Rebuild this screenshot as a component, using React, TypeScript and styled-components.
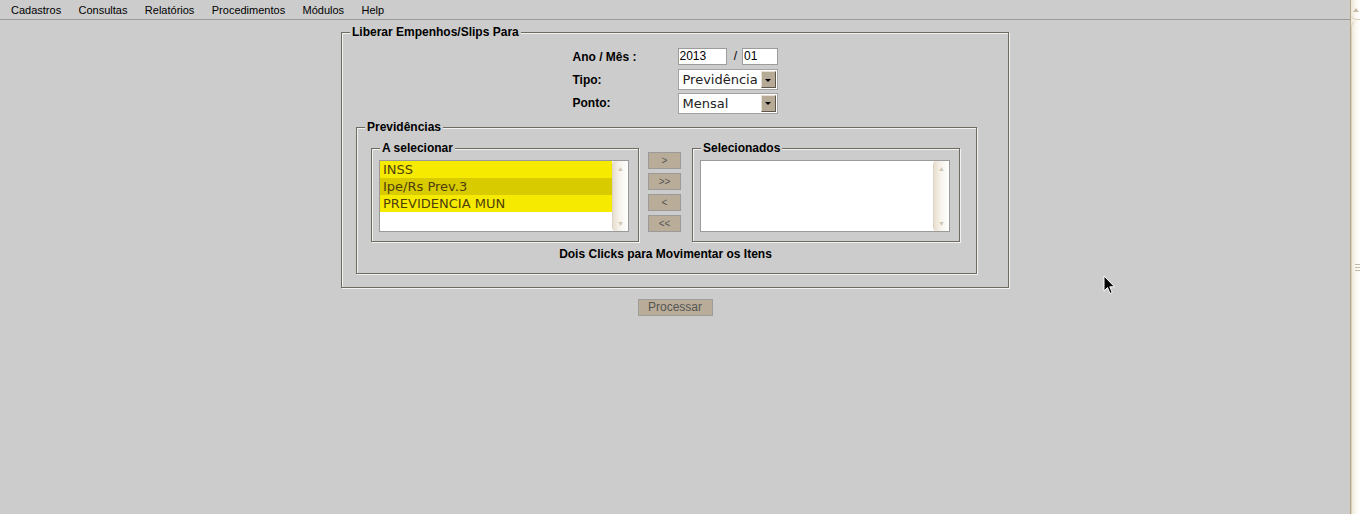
import React from "react";
import styled, { createGlobalStyle } from "styled-components";

const GlobalStyle = createGlobalStyle`
  html, body { margin: 0; padding: 0; background: #cccccc; overflow: hidden; }
  #root { width: 1360px; height: 514px; }
`;

const Page = styled.div`
  position: relative;
  display: flex;
  width: 1360px;
  height: 514px;
  background: #cccccc;
  font-family: "Liberation Sans", Arial, sans-serif;
`;

const Main = styled.div`
  flex: 1;
  min-width: 0;
  display: flex;
  flex-direction: column;
`;

const MenuBar = styled.nav`
  display: flex;
  align-items: center;
  gap: 17.4px;
  height: 19px;
  padding-left: 11px;
  border-bottom: 1px solid #9a9a9a;
  font-size: 11px;
  color: #000;
`;

const MenuItem = styled.span`
  white-space: nowrap;
  line-height: 20px;
`;

const Content = styled.div`
  display: flex;
  flex-direction: column;
  align-items: center;
  padding-top: 6px;
`;

const Group = styled.fieldset<{ $w: number; $pl: number; $pr: number; $pb: number; $mt?: number }>`
  box-sizing: border-box;
  width: ${(p) => p.$w}px;
  margin: ${(p) => p.$mt ?? 0}px 0 0;
  min-width: 0;
  min-inline-size: 0;
  padding: 0 ${(p) => p.$pr}px ${(p) => p.$pb}px ${(p) => p.$pl}px;
  border: 1px solid #6f6a60;
  box-shadow: inset 1px 1px 0 #f2f2f2, 1px 1px 0 #f2f2f2;
`;

const Legend = styled.legend<{ $shift: number }>`
  margin-left: ${(p) => p.$shift}px;
  padding: 0 2px;
  font: bold 12px/13px "Liberation Sans", Arial, sans-serif;
  color: #000;
  background: #cccccc;
`;

const FormGrid = styled.div`
  display: grid;
  grid-template-columns: 105px 100px;
  grid-template-rows: 23px 23px 24px;
  justify-content: center;
  align-items: center;
  margin-top: 6px;
`;

const Label = styled.span`
  font: bold 12px/14px "Liberation Sans", Arial, sans-serif;
  color: #000;
  white-space: nowrap;
`;

const DateRow = styled.div`
  display: flex;
  align-items: center;
`;

const TextBox = styled.div<{ $w: number }>`
  box-sizing: border-box;
  width: ${(p) => p.$w}px;
  height: 17px;
  padding-left: 1px;
  background: #fff;
  border: 1px solid #9c9c9c;
  font: 12px/15px "Liberation Sans", Arial, sans-serif;
  color: #000;
`;

const Slash = styled.span`
  margin: 0 5px 0 7px;
  font: 12px/15px "Liberation Sans", Arial, sans-serif;
  color: #000;
`;

const Select = styled.div`
  box-sizing: border-box;
  display: flex;
  width: 100px;
  height: 21px;
  padding: 1px;
  background: #fff;
  border: 1px solid #a3a3a3;
`;

const SelectText = styled.span`
  flex: 1;
  min-width: 0;
  padding-left: 3px;
  overflow: hidden;
  white-space: nowrap;
  font: 13px/17px "DejaVu Sans", sans-serif;
  color: #222;
`;

const SelectArrow = styled.span`
  box-sizing: border-box;
  display: flex;
  align-items: center;
  justify-content: center;
  width: 15px;
  background: #b7aa96;
  border: 1px solid;
  border-color: #e6dfd2 #5c554a #5c554a #e6dfd2;

  &::after {
    content: "";
    width: 0;
    height: 0;
    border-left: 3px solid transparent;
    border-right: 3px solid transparent;
    border-top: 3px solid #000;
    margin-top: 1px;
  }
`;

const Transfer = styled.div`
  display: flex;
  align-items: flex-start;
  margin-top: 8px;
`;

const ButtonCol = styled.div`
  display: flex;
  flex-direction: column;
  gap: 4px;
  margin: 10px 11px 0 9px;
`;

const MoveButton = styled.button`
  box-sizing: border-box;
  width: 33px;
  height: 17px;
  padding: 0;
  background: #b9ac98;
  border: 1px solid #9a9a9a;
  font: 10px/15px "Liberation Sans", Arial, sans-serif;
  color: #555;
`;

const ListBox = styled.div`
  box-sizing: border-box;
  display: flex;
  width: 250px;
  height: 72px;
  margin-top: 5px;
  background: #fff;
  border: 1px solid #9a9a9a;
`;

const Rows = styled.div`
  flex: 1;
  min-width: 0;
`;

const Row = styled.div<{ $dark?: boolean }>`
  height: 17px;
  padding-left: 3px;
  font: 13px/17px "DejaVu Sans", sans-serif;
  color: #4e3e0a;
  white-space: nowrap;
  background: ${(p) => (p.$dark ? "#d8cb00" : "#f6ea00")};
`;

const ListScroll = styled.div`
  box-sizing: border-box;
  display: flex;
  flex-direction: column;
  justify-content: space-between;
  align-items: center;
  width: 16px;
  padding: 4px 0 3px;
  border-left: 1px solid #ddd4c3;
  border-radius: 4px;
  background: linear-gradient(to right, #e7dfcf, #f7f3ec 45%, #ffffff);
  font-size: 7px;
  line-height: 8px;
  color: #cfc5b3;
`;

const Hint = styled.div`
  width: 589px;
  margin-top: 6px;
  text-align: center;
  font: bold 12px/13px "Liberation Sans", Arial, sans-serif;
  color: #000;
`;

const ProcessButton = styled.button`
  box-sizing: border-box;
  width: 75px;
  height: 17px;
  margin-top: 11px;
  padding: 0;
  background: #b9ac98;
  border: 1px solid #9d9d9d;
  font: 12px/15px "Liberation Sans", Arial, sans-serif;
  color: #555;
`;

const PageScroll = styled.div`
  box-sizing: border-box;
  display: flex;
  flex-direction: column;
  width: 10px;
  height: 514px;
  border-left: 1px solid #b8a886;
  background: linear-gradient(to right, #ece5d7, #faf7f1 50%, #ffffff);
`;

const ScrollArrow = styled.div`
  display: flex;
  justify-content: center;
  height: 20px;
  padding-top: 8px;
  box-sizing: border-box;
  border-bottom: 1px solid #d6ccb8;
  border-bottom-left-radius: 6px;

  &::after {
    content: "";
    width: 0;
    height: 0;
    border-left: 3px solid transparent;
    border-right: 3px solid transparent;
    border-bottom: 4px solid #c9bea9;
  }
`;

const Thumb = styled.div`
  flex: 1;
  display: flex;
  flex-direction: column;
  justify-content: center;
  align-items: flex-end;
  gap: 2px;
  margin-top: 1px;
  border-top-left-radius: 6px;
  border-left: 1px solid #d9cfbc;
`;

const Grip = styled.span`
  display: block;
  width: 5px;
  height: 1px;
  background: #c3b8a2;
`;

const Cursor = styled.svg`
  position: absolute;
  left: 1103px;
  top: 275px;
`;

export default function App() {
  const menu = ["Cadastros", "Consultas", "Relatórios", "Procedimentos", "Módulos", "Help"];
  return (
    <Page>
      <GlobalStyle />
      <Main>
        <MenuBar>
          {menu.map((m) => (
            <MenuItem key={m}>{m}</MenuItem>
          ))}
        </MenuBar>
        <Content>
          <Group $w={668} $pl={14} $pr={14} $pb={13}>
            <Legend $shift={-6}>Liberar Empenhos/Slips Para</Legend>
            <FormGrid>
              <Label>Ano / Mês :</Label>
              <DateRow>
                <TextBox $w={50}>2013</TextBox>
                <Slash>/</Slash>
                <TextBox $w={36}>01</TextBox>
              </DateRow>
              <Label>Tipo:</Label>
              <Select>
                <SelectText>Previdência</SelectText>
                <SelectArrow />
              </Select>
              <Label>Ponto:</Label>
              <Select>
                <SelectText>Mensal</SelectText>
                <SelectArrow />
              </Select>
            </FormGrid>
            <Group $w={621} $pl={14} $pr={15} $pb={12} $mt={6}>
              <Legend $shift={-6}>Previdências</Legend>
              <Transfer>
                <Group $w={268} $pl={7} $pr={9} $pb={9}>
                  <Legend $shift={1}>A selecionar</Legend>
                  <ListBox>
                    <Rows>
                      <Row>INSS</Row>
                      <Row $dark>Ipe/Rs Prev.3</Row>
                      <Row>PREVIDENCIA MUN</Row>
                    </Rows>
                    <ListScroll>
                      <span>▲</span>
                      <span>▼</span>
                    </ListScroll>
                  </ListBox>
                </Group>
                <ButtonCol>
                  <MoveButton>&gt;</MoveButton>
                  <MoveButton>&gt;&gt;</MoveButton>
                  <MoveButton>&lt;</MoveButton>
                  <MoveButton>&lt;&lt;</MoveButton>
                </ButtonCol>
                <Group $w={268} $pl={7} $pr={9} $pb={9}>
                  <Legend $shift={1}>Selecionados</Legend>
                  <ListBox>
                    <Rows />
                    <ListScroll>
                      <span>▲</span>
                      <span>▼</span>
                    </ListScroll>
                  </ListBox>
                </Group>
              </Transfer>
              <Hint>Dois Clicks para Movimentar os Itens</Hint>
            </Group>
          </Group>
          <ProcessButton>Processar</ProcessButton>
        </Content>
      </Main>
      <PageScroll>
        <ScrollArrow />
        <Thumb>
          <Grip />
          <Grip />
          <Grip />
        </Thumb>
      </PageScroll>
      <Cursor width="13" height="21" viewBox="0 0 13 21">
        <path
          d="M1 1 L1 16 L4.5 12.5 L7 18.5 L9.2 17.6 L6.8 11.8 L11.5 11.8 Z"
          fill="#000"
          stroke="#fff"
          strokeWidth="1"
          strokeLinejoin="miter"
        />
      </Cursor>
    </Page>
  );
}
